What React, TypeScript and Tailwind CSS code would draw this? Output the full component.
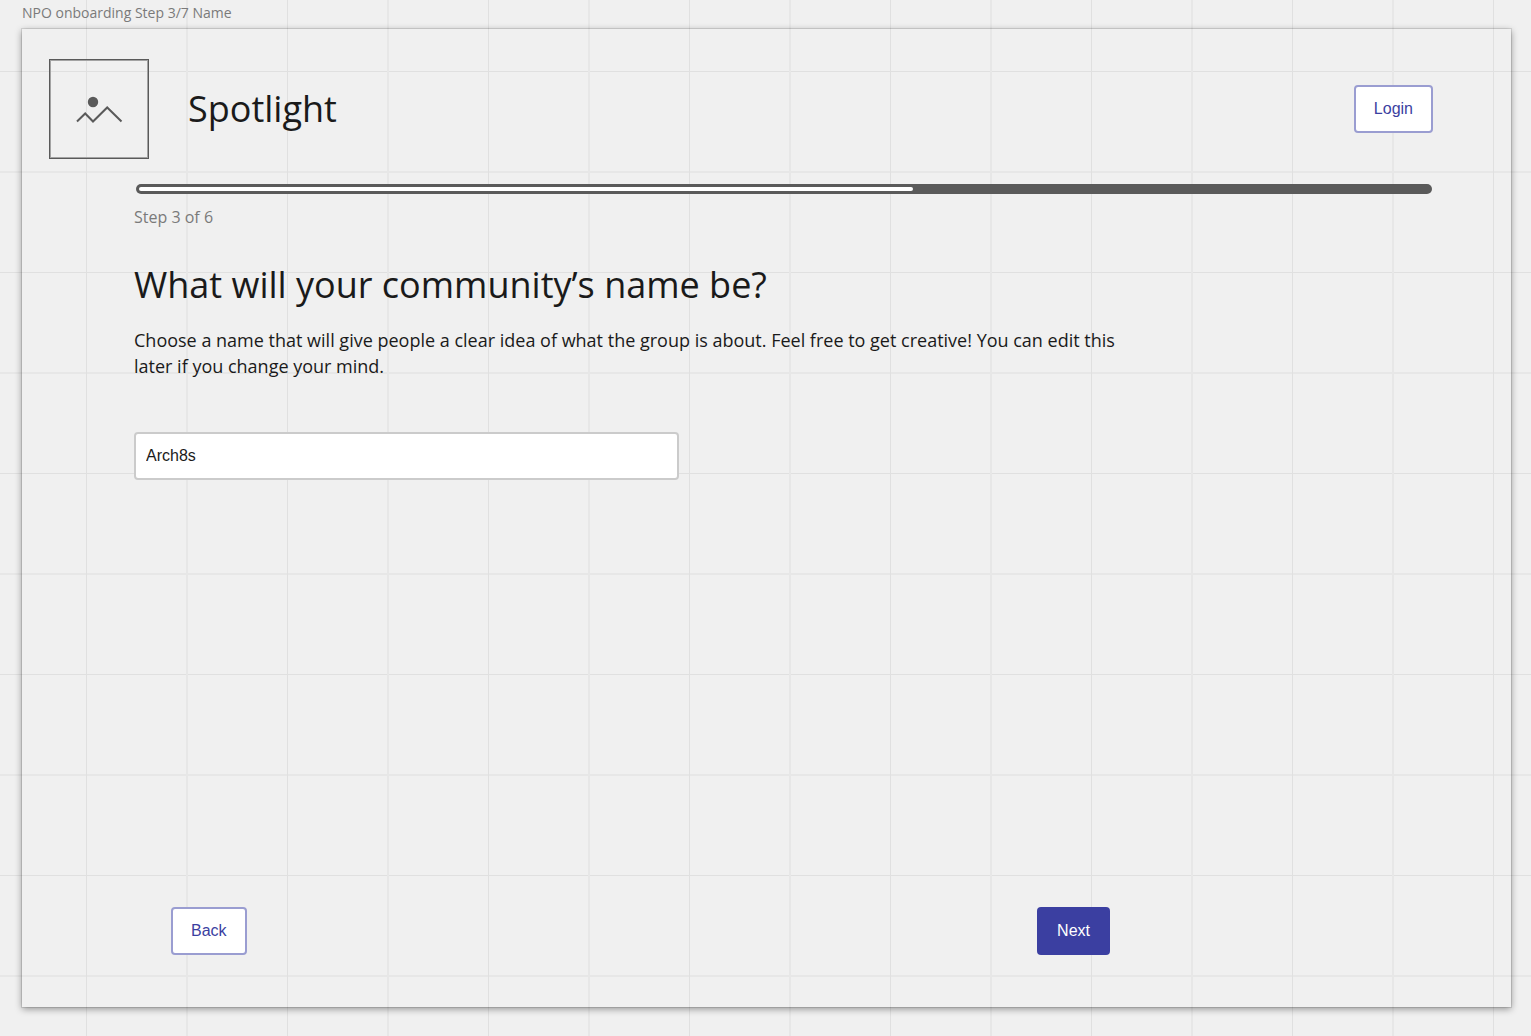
import { useState } from "react";

const steps = { current: 3, total: 6, completion: 60 };

function ImagePlaceholder() {
  return (
    <div className="size-[100px] shrink-0 border border-[#5a5a5a] shadow-[inset_0_0_0_1px_#a3a3a3]">
      <svg viewBox="0 0 98 98" className="size-full" fill="none" role="img" aria-label="Logo placeholder">
        <circle cx="43" cy="42" r="5.2" fill="#5a5a5a" />
        <path d="M27 61.5L35.2 53.5L43 61.5L57.2 47.5L71.5 61.5" stroke="#5a5a5a" strokeWidth="2" />
      </svg>
    </div>
  );
}

function OutlineButton({ label }: { label: string }) {
  return (
    <button
      type="button"
      className="h-12 shrink-0 rounded-sm border-2 border-[#9a9dd1] bg-white px-[18px] font-['Liberation_Sans',Arial,sans-serif] text-base text-[#3b3fa1]"
    >
      {label}
    </button>
  );
}

function StepProgress() {
  return (
    <div className="flex flex-col gap-[11px]">
      <div
        role="progressbar"
        aria-label="Onboarding progress"
        aria-valuenow={steps.completion}
        aria-valuemin={0}
        aria-valuemax={100}
        className="ml-0.5 rounded-full bg-[#5a5a5a] p-[3px]"
      >
        <div className="h-1 rounded-full bg-white" style={{ width: `${steps.completion}%` }} />
      </div>
      <p className="text-base leading-6 text-[#7a7a7a]">
        Step {steps.current} of {steps.total}
      </p>
    </div>
  );
}

export default function App() {
  const [name, setName] = useState("Arch8s");

  return (
    <div className="flex min-h-screen flex-col bg-[#f0f0f0] bg-[linear-gradient(to_right,#e0e0e0_0_1px,transparent_1px_100px,#e7e7e7_100px_102px,transparent_102px),linear-gradient(to_bottom,#e0e0e0_0_1px,transparent_1px_100px,#e7e7e7_100px_102px,transparent_102px)] bg-size-[201px_201px] bg-position-[86px_71px] pr-5 pb-[29px] pl-[22px] font-['Open_Sans',sans-serif] text-[#1a1a1a]">
      <p className="h-[29px] text-sm leading-[26px] text-[#7a7a7a]">NPO onboarding Step 3/7 Name</p>

      <div className="flex flex-1 flex-col shadow-[0_0_0_1px_rgba(0,0,0,0.1),0_2px_7px_rgba(0,0,0,0.4)]">
        <header className="flex items-center gap-[39px] pt-[30px] pr-[78px] pl-[27px]">
          <ImagePlaceholder />
          <p className="flex-1 text-4xl">Spotlight</p>
          <OutlineButton label="Login" />
        </header>

        <main className="flex flex-1 flex-col pt-[25px] pr-[79px] pb-[52px] pl-28">
          <StepProgress />

          <h1 className="mt-7 text-4xl leading-[56px]">What will your community’s name be?</h1>
          <p id="name-help" className="mt-3.5 max-w-[1000px] text-lg leading-[26px]">
            Choose a name that will give people a clear idea of what the group is about. Feel free to get creative!
            You can edit this later if you change your mind.
          </p>
          <input
            type="text"
            aria-label="Community name"
            aria-describedby="name-help"
            value={name}
            onChange={(event) => setName(event.target.value)}
            className="mt-[53px] h-12 w-full max-w-[545px] rounded-sm border-2 border-[#cbcbcb] bg-white px-2.5 font-['Liberation_Sans',Arial,sans-serif] text-base"
          />

          <div className="mt-auto flex max-w-[976px] justify-between pl-[37px]">
            <OutlineButton label="Back" />
            <button
              type="button"
              className="h-12 rounded-sm bg-[#3b3fa1] px-5 font-['Liberation_Sans',Arial,sans-serif] text-base text-white"
            >
              Next
            </button>
          </div>
        </main>
      </div>
    </div>
  );
}
